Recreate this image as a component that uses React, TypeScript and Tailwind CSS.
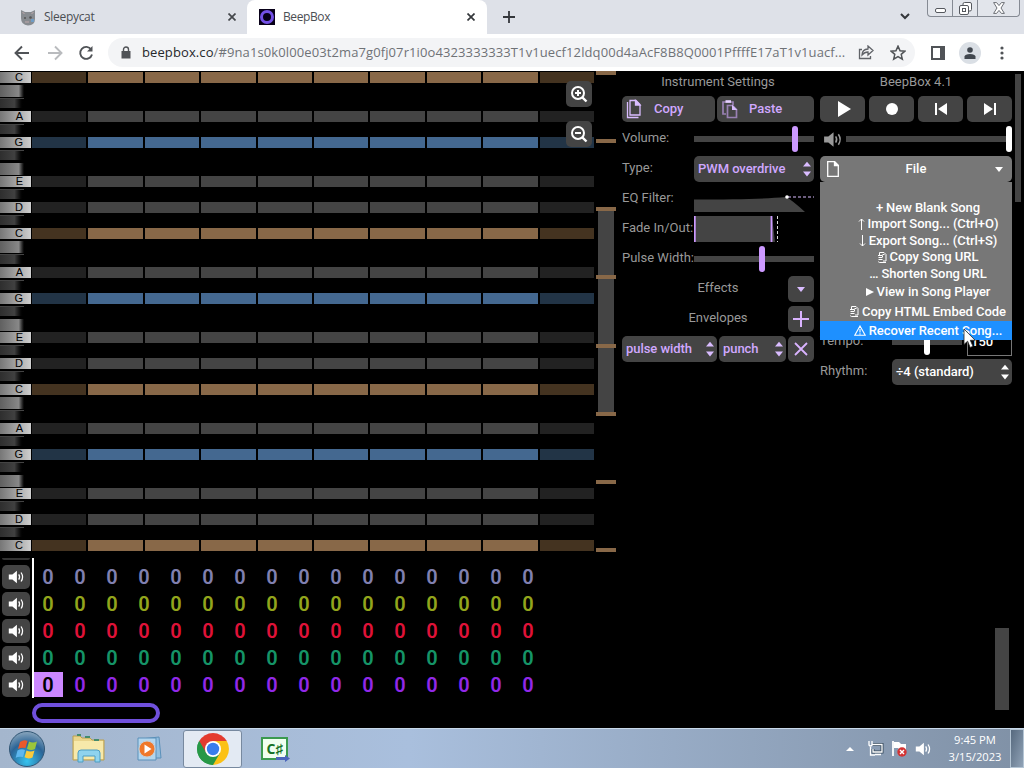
import React from "react";

const KEYS = ["C", "B", "A#", "A", "G#", "G", "F#", "F", "E", "D#", "D", "C#"];
const ROWS = Array.from({ length: 37 }, (_, i) => KEYS[i % 12]);

function rowColor(key: string, dim: boolean) {
  if (key === "C") return dim ? "bg-[#443320]" : "bg-[#886848]";
  if (key === "G") return dim ? "bg-[#223446]" : "bg-[#446890]";
  if (key === "A" || key === "E" || key === "D") return dim ? "bg-[#222222]" : "bg-[#444444]";
  return "bg-black";
}

function PianoKey({ name }: { name: string }) {
  if (name.length === 1 && name !== "B" && name !== "F") {
    return (
      <div className="h-[13px] w-[32px] py-px">
        <div className="flex h-[11px] w-[31px] items-center justify-end bg-linear-to-r from-[#777] to-[#cfcfcf] pr-[8px] font-['Liberation_Sans'] text-[11px] leading-none text-black">
          {name}
        </div>
      </div>
    );
  }
  const light = name === "B" || name === "F";
  return (
    <div className="h-[13px] w-[32px] py-px">
      <div
        className={
          light
            ? "h-[12px] w-[25px] bg-linear-to-r from-[#606060] via-[#888] via-75% to-black"
            : "h-[10px] w-[24px] border-t border-[#444] bg-linear-to-r from-[#2e2e2e] via-[#404040] via-60% to-black"
        }
      />
    </div>
  );
}

function ZoomIcon({ plus }: { plus: boolean }) {
  return (
    <div className="flex size-[26px] items-center justify-center rounded-[5px] bg-[#444]">
      <svg width="18" height="18" viewBox="0 0 18 18" fill="none" stroke="white" strokeWidth="2">
        <circle cx="8" cy="8" r="6" />
        <path d="M12.3 12.3L16.5 16.5" strokeWidth="2.4" />
        <path d={plus ? "M5 8h6M8 5v6" : "M5 8h6"} />
      </svg>
    </div>
  );
}

function Speaker({ color = "white", size = 20 }: { color?: string; size?: number }) {
  return (
    <svg width={size} height={size} viewBox="0 0 20 20" fill="none">
      <path d="M2 7.2h4L11 3v14L6 12.8H2z" fill={color} />
      <path d="M13 7q2 3 0 6M15.6 5q3.4 5 0 10" stroke={color} strokeWidth="1.4" />
    </svg>
  );
}

const TRACKS = ["text-[#8080b0]", "text-[#92a51c]", "text-[#df1238]", "text-[#159467]", "text-[#9128e8]"];

function PatternEditor() {
  return (
    <div className="flex h-[481px] w-[616px]">
      <div className="w-[32px] shrink-0">
        {ROWS.map((k, i) => <PianoKey key={i} name={k} />)}
      </div>
      <div className="relative w-[564px] shrink-0">
        {ROWS.map((k, i) => (
          <div key={i} className="grid h-[13px] grid-cols-10 py-px">
            {Array.from({ length: 10 }, (_, c) => (
              <div key={c} className="border-r-2 border-black">
                <div className={`h-[11px] ${rowColor(k, c === 0 || c === 9)}`} />
              </div>
            ))}
          </div>
        ))}
        <div className="absolute top-[10px] right-[4px] flex flex-col gap-[14px]">
          <ZoomIcon plus />
          <ZoomIcon plus={false} />
        </div>
      </div>
      <div className="relative w-[20px] shrink-0">
        <div className="absolute top-[140px] left-[2px] h-[202px] w-[16px] bg-[#444]" />
        <div className="relative flex h-[481px] flex-col justify-between">
          {Array.from({ length: 8 }, (_, i) => <div key={i} className="h-[4px] bg-[#886848]" />)}
        </div>
      </div>
    </div>
  );
}

function TrackEditor() {
  return (
    <div className="flex h-[140px]">
      <div className="flex w-[32px] flex-col pl-[2px]">
        <div className="mb-[3px] h-[2px] w-[28px] shrink-0 rounded-b bg-[#333]" />
        {TRACKS.map((t) => (
          <div key={t} className="flex h-[27px] shrink-0 items-center">
            <div className="flex h-[24px] w-[28px] items-center justify-center rounded-[5px] bg-[#444] pr-px">
              <Speaker size={18} />
            </div>
          </div>
        ))}
      </div>
      <div className="w-[2px] bg-white" />
      <div className="flex flex-col pt-[4px] font-['Roboto']">
        {TRACKS.map((t, r) => (
          <div key={t} className={`flex h-[27px] text-[20px] font-semibold ${t}`}>
            {Array.from({ length: 16 }, (_, c) => (
              <div key={c} className="flex w-[32px] items-center pt-px">
                <div className={`flex h-[25px] w-[29px] items-center justify-center pt-px pr-px ${r === 4 && c === 0 ? "bg-[#cc88ff] text-black" : ""}`}>0</div>
              </div>
            ))}
          </div>
        ))}
      </div>
    </div>
  );
}

function UpDown({ color }: { color: string }) {
  return (
    <svg width="8" height="16" viewBox="0 0 8 16" fill={color}>
      <path d="M0 5.6L4 .8l4 4.8zM0 10.6h8L4 15.4z" />
    </svg>
  );
}

function Slider({ pos, accent }: { pos: string; accent: string }) {
  return (
    <div className="flex h-[26px] grow items-center">
      <div className="relative flex h-[6px] w-full items-center bg-[#444]">
        <div className={`absolute h-[26px] w-[6px] rounded-[3px] ${pos} ${accent}`} />
      </div>
    </div>
  );
}

function Row({ label, children }: { label: string; children: React.ReactNode }) {
  return (
    <div className="flex h-[30px] items-center">
      <span className="w-[72px] shrink-0 whitespace-nowrap pb-[2px] text-[#999]">{label}</span>
      {children}
    </div>
  );
}

function Select({ text, w, light }: { text: string; w: string; light?: boolean }) {
  return (
    <div className={`flex h-[26px] items-center justify-between rounded-[5px] bg-[#444] pr-[3px] pl-[4px] font-medium tracking-[-0.05px] ${w} ${light ? "text-white" : "text-[#d0a8ff]"}`}>
      <span className="whitespace-nowrap">{text}</span>
      <UpDown color={light ? "#fff" : "#d9bcff"} />
    </div>
  );
}

function InstrumentPanel() {
  return (
    <div className="flex w-[192px] flex-col">
      <div className="flex h-[23px] items-center justify-center pb-[2px] text-[#999]">Instrument Settings</div>
      <div className="flex h-[30px] items-center justify-between font-medium text-[#d0a8ff]">
        <div className="flex h-[26px] w-[93px] items-center rounded-[5px] bg-[#444] pl-[4px]">
          <svg width="16" height="20" viewBox="0 0 16 20" fill="none" stroke="#d9bcff" strokeWidth="1.3">
            <path d="M4 1.500h6l4 4V16h-10z" />
            <path d="M9.500 1.500v4.500h4.500z" fill="#d9bcff" />
            <path d="M1.500 3v15.500h11" />
          </svg>
          <span className="ml-[12px]">Copy</span>
        </div>
        <div className="flex h-[26px] w-[97px] items-center rounded-[5px] bg-[#444] pl-[4px]">
          <svg width="18" height="20" viewBox="0 0 18 20" fill="none" stroke="#9980b3" strokeWidth="1.7">
            <path d="M5 15H2V3h10v3" />
            <path d="M4.500 2.500h5.500" stroke="#e6d0ff" strokeWidth="2.600" />
            <path d="M6.500 6.500h5l4 4v8h-9z" fill="#444" />
            <path d="M11 5.700l5.300 5.300H11z" fill="#d9bcff" stroke="none" />
          </svg>
          <span className="ml-[10px]">Paste</span>
        </div>
      </div>
      <Row label="Volume:"><Slider pos="left-[98px]" accent="bg-[#cc99ff]" /></Row>
      <Row label="Type:"><Select text="PWM overdrive" w="w-[120px]" /></Row>
      <Row label="EQ Filter:">
        <svg width="120" height="26" viewBox="0 0 120 26">
          <path d="M0 13.500C40 13.500 70 13 92 11Q98 14 111 26H0z" fill="#444" />
          <path d="M94 11H120" stroke="#d9bcff" strokeDasharray="3 2" />
          <circle cx="93" cy="11" r="1.8" fill="white" />
        </svg>
      </Row>
      <Row label="Fade In/Out:">
        <svg width="120" height="26" viewBox="0 0 120 26">
          <path d="M0 0H78L81 26H0z" fill="#444" />
          <path d="M.8 0V26M77.5 0V26" stroke="#cc99ff" strokeWidth="1.8" />
          <path d="M83.5 0V26" stroke="#d8d8d8" strokeDasharray="3 2" />
        </svg>
      </Row>
      <Row label="Pulse Width:"><Slider pos="left-[65px]" accent="bg-[#cc99ff]" /></Row>
      <div className="flex h-[30px] items-center text-[#999]">
        <span className="grow pb-[2px] pl-[26px] text-center">Effects</span>
        <div className="flex size-[26px] items-center justify-center rounded-[5px] bg-[#444]">
          <svg width="8" height="5" viewBox="0 0 8 5" fill="#d9bcff"><path d="M0 0h8L4 5z" /></svg>
        </div>
      </div>
      <div className="flex h-[30px] items-center text-[#999]">
        <span className="grow pb-[2px] pl-[26px] text-center">Envelopes</span>
        <div className="flex size-[26px] items-center justify-center rounded-[5px] bg-[#444]">
          <svg width="16" height="16" viewBox="0 0 16 16" stroke="#d9b3ff" strokeWidth="2"><path d="M0 8h16M8 0v16" /></svg>
        </div>
      </div>
      <div className="flex h-[30px] items-center justify-between">
        <Select text="pulse width" w="w-[95px]" />
        <Select text="punch" w="w-[67px]" />
        <div className="flex size-[26px] items-center justify-center rounded-[5px] bg-[#444]">
          <svg width="14" height="14" viewBox="0 0 14 14" stroke="#d9b3ff" strokeWidth="1.8"><path d="M1 1l12 12M13 1L1 13" /></svg>
        </div>
      </div>
    </div>
  );
}

function PageGlyph() {
  return (
    <svg width="9" height="11" viewBox="0 0 9 11" fill="none" stroke="white" strokeWidth="1" className="inline-block">
      <path d="M1.500 .5h4.500l2 2v6.500H5M1.500 .5v2.500M0 3.500h4.500v1.500M.5 5.500h4M.5 7.500h4M.5 9.500q0 1 1 1h6.500M4.500 2.500h2" />
    </svg>
  );
}

const MENU: { h: string; icon: React.ReactNode; text: string; hot?: boolean }[] = [
  { h: "h-[16px]", icon: "+", text: "New Blank Song" },
  { h: "h-[16px]", icon: <svg width="7" height="12" viewBox="0 0 7 12" fill="none" stroke="white" className="inline-block"><path d="M3.500 12V1M1 3.500L3.500 1L6 3.500" /></svg>, text: "Import Song... (Ctrl+O)" },
  { h: "h-[17px]", icon: <svg width="7" height="12" viewBox="0 0 7 12" fill="none" stroke="white" className="inline-block"><path d="M3.500 0V11M1 8.500L3.500 11L6 8.500" /></svg>, text: "Export Song... (Ctrl+S)" },
  { h: "h-[16px]", icon: <PageGlyph />, text: "Copy Song URL" },
  { h: "h-[17px]", icon: "…", text: "Shorten Song URL" },
  { h: "h-[20px]", icon: <svg width="8" height="8" viewBox="0 0 8 8" fill="white" className="inline-block"><path d="M0 0l8 4-8 4z" /></svg>, text: "View in Song Player" },
  { h: "h-[19px]", icon: <PageGlyph />, text: "Copy HTML Embed Code" },
  { h: "h-[19px]", icon: <svg width="12" height="11" viewBox="0 0 12 11" fill="none" stroke="white" strokeWidth="1.100" className="inline-block"><path d="M6 1L11.200 10.300H.8zM6 4v3.500M6 8.300v1.200" /></svg>, text: "Recover Recent Song...", hot: true },
];

function FileMenu() {
  return (
    <div className="absolute top-[26px] left-0 z-10 flex h-[158px] w-[192px] flex-col bg-[#777] pt-[18px] font-medium tracking-[-0.05px] text-white">
      {MENU.map((m) => (
        <div key={m.text} className={`flex shrink-0 items-center justify-center pl-[24px] ${m.h} ${m.hot ? "bg-[#1e90ff]" : ""}`}>
          <span className="flex items-center gap-[3px] whitespace-nowrap">{m.icon}<span>{m.text}</span></span>
        </div>
      ))}
      <svg className="absolute top-[146px] left-[143px]" width="14" height="22" viewBox="0 0 14 22">
        <path d="M1 1v15.500l3.600-3.300 2.600 6.300 2.800-1.200-2.700-6h4.900z" fill="white" stroke="#222" strokeWidth=".8" />
      </svg>
    </div>
  );
}

function SongPanel() {
  const icons = [
    <svg key="a" width="13" height="16" viewBox="0 0 13 16" fill="white" className="ml-[4px]"><path d="M0 0l13 8-13 8z" /></svg>,
    <svg key="b" width="12" height="12" viewBox="0 0 12 12" fill="white"><circle cx="6" cy="6" r="6" /></svg>,
    <svg key="c" width="12" height="12" viewBox="0 0 12 12" fill="white"><path d="M0 0h2v12H0zM12 0v12L3 6z" /></svg>,
    <svg key="d" width="12" height="12" viewBox="0 0 12 12" fill="white"><path d="M10 0h2v12h-2zM0 0v12l9-6z" /></svg>,
  ];
  return (
    <div className="flex w-[192px] flex-col">
      <div className="flex h-[23px] items-center justify-center pb-[2px] text-[#999]">BeepBox 4.1</div>
      <div className="flex h-[30px] items-center justify-between">
        {icons.map((ic, i) => <div key={i} className="flex h-[26px] w-[45px] items-center justify-center rounded-[5px] bg-[#444]">{ic}</div>)}
      </div>
      <div className="flex h-[30px] items-center">
        <div className="w-[26px] pl-[2px]"><Speaker color="#999" size={21} /></div>
        <Slider pos="right-0" accent="bg-white" />
      </div>
      <div className="flex h-[30px] items-center">
        <div className="relative flex h-[26px] w-full items-center justify-between rounded-[5px] bg-[#777] pr-[9px] pl-[7px] font-medium text-white">
          <svg width="12" height="16" viewBox="0 0 12 16" fill="none" stroke="white" strokeWidth="1.300"><path d="M.7.7h6.800l3.800 3.800v10.800H.7z" /><path d="M7.500.7v3.800h3.800z" fill="white" /></svg>
          <span className="mr-[2px]">File</span>
          <svg width="8" height="5" viewBox="0 0 8 5" fill="white"><path d="M0 0h8L4 5z" /></svg>
          <FileMenu />
        </div>
      </div>
      <div className="mt-[143px] flex h-[30px] items-center">
        <span className="w-[72px] pb-[2px] text-[#999]">Tempo:</span>
        <div className="w-[70px]"><Slider pos="left-[32px]" accent="bg-white" /></div>
        <div className="ml-[5px] flex h-[27px] w-[45px] items-center border border-[#777] pl-[3px] font-medium text-white">150</div>
      </div>
      <div className="flex h-[30px] items-center justify-between">
        <span className="pb-[2px] text-[#999]">Rhythm:</span>
        <Select text="÷4 (standard)" w="w-[120px]" light />
      </div>
    </div>
  );
}

function BrowserChrome() {
  return (
    <div className="h-[71px] font-['Open_Sans'] text-[#4b4e53]">
      <div className="flex h-[34px] bg-[#dee1e8]">
        <div className="flex w-[247px] items-center pl-[20px] text-[12px]">
          <svg width="16" height="17" viewBox="0 0 16 17">
            <path d="M1 1l4 2h6l4-2v9q0 6-7 6.500Q1 16 1 9z" fill="#878b90" />
            <path d="M2.500 3l2 2M13.500 3l-2 2M5 13h4" stroke="#c0a9ac" />
            <circle cx="5" cy="9" r="1" fill="#555" /><circle cx="10.500" cy="8.500" r="1.300" fill="#555" />
            <path d="M11 10h3v3h-3z" fill="#6f9cc5" />
          </svg>
          <span className="ml-[8px] grow tracking-[-0.3px]">Sleepycat</span>
          <svg width="8" height="8" viewBox="0 0 8 8" stroke="#44474b" strokeWidth="1.700" className="mr-[11px]"><path d="M.5.5l7 7M7.500.5l-7 7" /></svg>
        </div>
        <div className="flex w-[240px] items-center rounded-t-[8px] bg-white pl-[12px] text-[12px]">
          <svg width="16" height="16" viewBox="0 0 16 16"><path d="M0 0h16v16H0z" fill="#080018" /><circle cx="8" cy="8" r="5.500" fill="none" stroke="#7350e6" strokeWidth="3" /></svg>
          <span className="ml-[8px] grow tracking-[-0.4px]">BeepBox</span>
          <svg width="8" height="8" viewBox="0 0 8 8" stroke="#34373b" strokeWidth="1.700" className="mr-[12px]"><path d="M.5.5l7 7M7.500.5l-7 7" /></svg>
        </div>
        <svg width="12" height="12" viewBox="0 0 12 12" stroke="#34373b" strokeWidth="1.800" className="mt-[11px] ml-[16px]"><path d="M0 6h12M6 0v12" /></svg>
        <div className="grow" />
        <svg width="10" height="7" viewBox="0 0 10 7" fill="none" stroke="#34373b" strokeWidth="2" className="mt-[13px] mr-[17px]"><path d="M1 1l4 4 4-4" /></svg>
        <div className="mr-[4px] flex h-[17px] w-[93px] rounded-b-[4px] border border-t-0 border-[#858a93] bg-[#e2e5eb]">
          <div className="flex w-[25px] items-end justify-center border-r border-[#858a93] pb-[3px]"><div className="h-[5px] w-[11px] rounded-[2px] border border-[#55585e] bg-white" /></div>
          <div className="flex w-[25px] items-center justify-center border-r border-[#858a93]">
            <svg width="13" height="13" viewBox="0 0 13 13" fill="white" stroke="#55585e"><rect x="4" y=".5" width="8.500" height="8.500" rx="1.500" /><rect x=".5" y="3.500" width="9" height="9" rx="1.500" /><rect x="3.500" y="6.500" width="3" height="3" /></svg>
          </div>
          <div className="flex grow items-center justify-center">
            <svg width="12" height="12" viewBox="0 0 12 12" fill="white" stroke="#6c6f75"><path d="M.6.6h3L6 3.600 8.400.6h3L8 6l3.400 5.400h-3L6 8.400l-2.400 3h-3L4 6z" /></svg>
          </div>
        </div>
      </div>
      <div className="flex h-[37px] items-center bg-white pl-[14px]">
        <svg width="16" height="16" viewBox="0 0 16 16" fill="none" stroke="#505357" strokeWidth="1.900"><path d="M15 8H2M8 1.500L1.500 8 8 14.500" /></svg>
        <svg width="16" height="16" viewBox="0 0 16 16" fill="none" stroke="#b9bbbe" strokeWidth="1.900" className="ml-[17px]"><path d="M1 8h13M8 1.500L14.500 8 8 14.500" /></svg>
        <svg width="16" height="16" viewBox="0 0 16 16" fill="none" stroke="#505357" strokeWidth="1.900" className="ml-[15px]"><path d="M13.200 4.500A6 6 0 1 0 14 9.500" /><path d="M14.500 1v5.500H9z" fill="#505357" stroke="none" /></svg>
        <div className="ml-[14px] flex h-[29px] w-[807px] items-center rounded-full bg-[#f3f4f6] pl-[13px]">
          <svg width="10" height="13" viewBox="0 0 10 13"><path d="M.5 5h9v7.500h-9z" fill="#505357" /><path d="M2.500 5V3.500a2.500 2.500 0 0 1 5 0V5" fill="none" stroke="#505357" strokeWidth="1.400" /></svg>
          <span className="ml-[11px] w-[704px] shrink-0 whitespace-nowrap text-[13px] tracking-[0.105px] text-[#6f7276]"><span className="text-[#26282b]">beepbox.co</span>/#9na1s0k0l00e03t2ma7g0fj07r1i0o4323333333T1v1uecf12ldq00d4aAcF8B8Q0001PffffE17aT1v1uacf...</span>
          <svg width="16" height="15" viewBox="0 0 16 15" fill="none" stroke="#606368" strokeWidth="1.300" className="ml-[12px] shrink-0"><path d="M4 4.500H1.500v9h11v-2.500M4 10q0-5.500 6-6V1l5 4.500-5 4.500V7Q6.500 7 4 10z" /></svg>
          <svg width="16" height="16" viewBox="0 0 14 14" fill="none" stroke="#505357" strokeWidth="1.300" className="ml-[16px] shrink-0"><path d="M7 1l1.800 4 4.200.4-3.200 2.800 1 4.200L7 10.200l-3.800 2.200 1-4.200L1 5.400 5.200 5z" /></svg>
        </div>
        <svg width="14" height="14" viewBox="0 0 14 14" className="ml-[16px]"><path d="M1 1h12v12H1z" fill="white" stroke="#505357" strokeWidth="2" /><path d="M9 1h4v12H9z" fill="#505357" /></svg>
        <div className="ml-[14px] flex size-[22px] items-center justify-center rounded-full bg-[#dadfe5]">
          <svg width="12" height="12" viewBox="0 0 12 12" fill="#41474f"><circle cx="6" cy="3" r="2.800" /><path d="M.5 12V9.500Q1 7 6 7t5.500 2.500V12z" /></svg>
        </div>
        <svg width="4" height="14" viewBox="0 0 4 14" fill="#505357" className="ml-[19px]"><circle cx="2" cy="2" r="1.600" /><circle cx="2" cy="7" r="1.600" /><circle cx="2" cy="12" r="1.600" /></svg>
      </div>
    </div>
  );
}

function Taskbar() {
  return (
    <div className="flex h-[40px] items-center border-t border-[#c8d9ea] bg-linear-to-r from-[#a4b6cd] via-[#a9bfdd] via-40% to-[#8091a6] font-['Open_Sans']">
      <svg width="38" height="38" viewBox="0 0 38 38" className="ml-[8px] shrink-0">
        <defs><radialGradient id="orb" cx=".5" cy=".85" r=".85"><stop offset="0" stopColor="#35c3ef" /><stop offset=".6" stopColor="#2b6496" /><stop offset="1" stopColor="#8aa6bd" /></radialGradient></defs>
        <circle cx="19" cy="19" r="17.500" fill="url(#orb)" stroke="#315675" />
        <path d="M12 12q4-3 7.500-1l-2 7q-4-1-7.500 1z" fill="#e9592b" />
        <path d="M21 11.500q4 2 8 0l-2 7.500q-4 2-8-.3z" fill="#9bc53b" />
        <path d="M9.500 20.500q4-2 7.500-.5l-2 7q-4-1-7.300.8z" fill="#5eb7ef" />
        <path d="M18.500 20.500q4 2 8 0l-2 7q-4 2-8-.2z" fill="#f9ca3c" />
      </svg>
      <svg width="34" height="32" viewBox="0 0 34 32" className="ml-[26px] shrink-0">
        <path d="M1 3h7l2 2h8l2 2h12v20H1z" fill="#e9d48b" stroke="#b99f50" />
        <path d="M2 8h29v18H2z" fill="#f7e9aa" />
        <path d="M5 2h4M13 4h5M22 7h5" stroke="#448b6e" strokeWidth="2" />
        <path d="M6 29V20q0-3 3-3h16q3 0 3 3v9h-5v-6H11v6z" fill="#8fd3ee" stroke="#4c9dc2" />
      </svg>
      <svg width="28" height="26" viewBox="0 0 28 26" className="ml-[31px] shrink-0">
        <path d="M4 3l18-2 2 21H4z" fill="#92bfe0" stroke="#5b90b9" /><path d="M1 2h18v22H1z" fill="#b3d6ee" stroke="#5b90b9" />
        <circle cx="10" cy="13" r="8" fill="#ef782a" stroke="#c8cdd2" /><path d="M7.500 8.500l7 4.500-7 4.500z" fill="white" />
      </svg>
      <div className="ml-[18px] flex h-[38px] w-[59px] shrink-0 items-center justify-center rounded-[3px] border border-[#77899f] bg-[#e3eaf3]">
        <svg width="32" height="32" viewBox="0 0 32 32">
          <path d="M16 16L2.200 8A16 16 0 0 1 29.800 8z" fill="#e33b2e" />
          <path d="M16 16L29.800 8A16 16 0 0 1 16 32z" fill="#fbc116" />
          <path d="M16 16L16 32A16 16 0 0 1 2.200 8z" fill="#279847" />
          <path d="M16 8h13.800L23 20z" fill="#fbc116" /><path d="M9 20L2.200 8 16 8z" fill="#e33b2e" /><path d="M2.200 8L9.100 20 23 20 16 32A16 16 0 0 1 2.200 8z" fill="#279847" />
          <circle cx="16" cy="16" r="8" fill="white" /><circle cx="16" cy="16" r="6.200" fill="#397ded" />
        </svg>
      </div>
      <div className="relative ml-[19px] flex h-[23px] w-[27px] shrink-0 items-center justify-center border-2 border-[#3b9a4f] bg-[#f0fff0] font-['Open_Sans'] text-[14px] font-bold text-[#157125]">C♯
        <svg width="14" height="7" viewBox="0 0 14 7" className="absolute -right-[4px] -bottom-[4px]" fill="#4c66bb"><path d="M0 2h9V0l5 3.500L9 7V5H0z" /></svg>
      </div>
      <div className="grow" />
      <svg width="8" height="4" viewBox="0 0 8 4" fill="white"><path d="M0 4l4-4 4 4z" /></svg>
      <svg width="17" height="17" viewBox="0 0 17 17" fill="none" className="ml-[13px]"><path d="M5.500 4.500H15V12H6v-3" stroke="#34485b" strokeWidth="3" /><path d="M5.500 4.500H15V12H6v-3M8 14.500h6M2 1v4q1.500 2 3 0V1M3.500 7v8H8" stroke="white" strokeWidth="1.300" /></svg>
      <svg width="16" height="17" viewBox="0 0 16 17" className="ml-[7px]"><path d="M2 1v15" stroke="white" strokeWidth="1.800" /><path d="M3 2h5l2 2h5v6H9L7 8H3z" fill="white" /><circle cx="11" cy="12" r="4.700" fill="#d33333" /><path d="M9 10l4 4M13 10l-4 4" stroke="white" strokeWidth="1.400" /></svg>
      <div className="ml-[7px]"><Speaker size={18} /></div>
      <div className="ml-[13px] flex w-[60px] flex-col items-center gap-[1px] text-[11.2px] leading-[16px] text-white"><span>9:45 PM</span><span className="whitespace-nowrap">3/15/2023</span></div>
      <div className="ml-[5px] h-[39px] w-[14px] border border-[#b4c5d4] bg-linear-to-br from-[#56697e] to-[#91a3b7]" />
    </div>
  );
}

export default function App() {
  return (
    <div className="flex h-[768px] w-[1024px] flex-col overflow-hidden bg-black font-['Roboto'] text-[13px]">
      <BrowserChrome />
      <main className="flex h-[657px] shrink-0">
        <div className="flex w-[616px] shrink-0 flex-col overflow-hidden">
          <PatternEditor />
          <div className="mt-[6px]"><TrackEditor /></div>
          <div className="mt-[5px] ml-[32px] h-[20px] w-[128px] rounded-full border-4 border-[#7050dc]" />
        </div>
        <div className="ml-[6px] flex gap-[6px]">
          <InstrumentPanel />
          <SongPanel />
        </div>
        <div className="flex w-[12px] flex-col items-end justify-between pt-[3px] pb-[18px]">
          <div className="mr-[3px] h-[128px] w-[6px] bg-[#444]" />
          <div className="mr-[15px] h-[82px] w-[14px] shrink-0 bg-[#444]" />
        </div>
      </main>
      <Taskbar />
    </div>
  );
}
